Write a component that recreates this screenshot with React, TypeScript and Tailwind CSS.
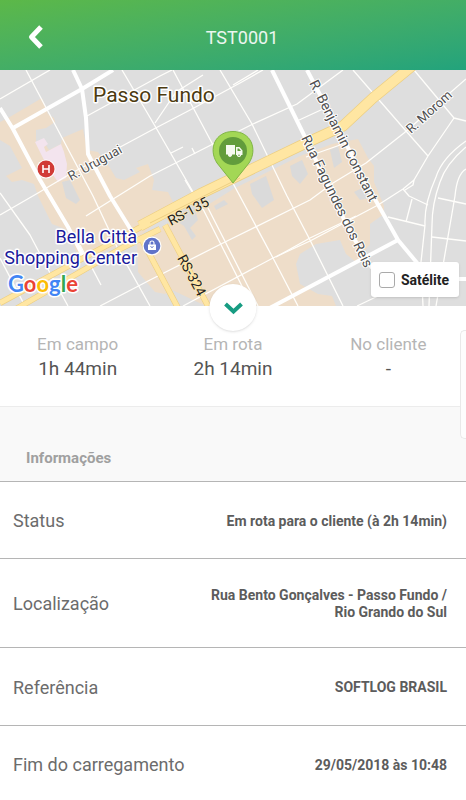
import React from "react";

const BLOCKS = [
  "8,118 42,98 48,114 54,118 55,122 46,128 36,130 36,142 44,142 49,150 61,144 62,138 83,129 87,150 98,152 110,168 116,178 124,180 140,172 136,168 148,164 154,180 152,190 168,192 174,204 160,220 137,238 80,262 68,230 52,224 46,212 38,196 34,184 22,180 12,182 6,176 22,168 10,146 0,140 0,122",
  "160,228 206,206 235,188 300,156 332,144 358,139 368,158 374,166 374,182 384,206 384,214 370,224 370,244 356,262 346,254 340,240 316,244 300,254 296,264 300,284 318,294 332,296 336,306 206,306 172,290 165,294 155,292 138,272 137,240",
];

const GAPS = [
  "62,182 70,180 80,200 76,204 66,198",
  "182,210 194,206 198,220 190,228 196,236 192,240 184,226 178,222",
  "250,184 266,176 274,200 262,208 252,194",
  "290,166 302,160 308,174 300,184 292,176",
  "330,150 338,146 342,162 334,168",
  "214,206 224,200 228,204 216,210",
  "354,192 366,186 370,198 360,200",
];

const STREETS = [
  "M26,70 L93,196 L117,247 L150,306",
  "M0,193 L30,235 L50,273 L68,306",
  "M0,258 L25,306",
  "M0,215 L38,193 L70,174 L150,131 L192,109 L240,83 L263,70",
  "M87,116 L160,76 L172,70",
  "M0,99 L50,70",
  "M122,70 L155,126 L193,192",
  "M155,123 L176,92 L203,75",
  "M86,216 L150,176 L213,144 L253,124 L297,104 L343,70",
  "M171,153 L183,147 M192,148 L195,154",
  "M233,85 L258,70",
  "M173,70 L213,145 L235,187 L273,258 L298,306",
  "M220,70 L252,124 L287,196 L310,240 L343,306",
  "M297,121 L323,109",
  "M306,157 L343,144",
  "M185,180 L203,210",
  "M203,209 L252,306 M208,208 L258,306",
  "M100,306 L150,280 L223,243 L310,200 L333,183 L366,163 L404,133 L466,79",
  "M183,306 L273,258 L310,241 L378,205 L403,189 L414,180 L428,156 L454,118",
  "M276,257 L310,238 L356,216",
  "M353,70 L406,131 L428,156",
  "M414,70 L454,118 L466,121",
  "M466,141 Q442,158 436,177 Q424,204 425,225 L421,262 L423,306",
  "M466,147 Q446,164 440,182 Q432,204 432,225 L429,306",
  "M466,169 Q457,174 455,196 L436,306",
  "M438,198 L466,204 M432,237 L466,241",
  "M388,217 L425,226",
  "M403,189 L409,196 L428,205 M414,180 L413,185 L405,190",
  "M412,199 L406,222",
  "M357,306 L378,296",
  "M80,245 L101,285",
];

const AVENUES = [
  "M13,128 L82,89 L113,70",
  "M0,108 L13,129 L40,180 L68,227 L83,256",
  "M73,70 L82,89 L86,118 L88,154 L110,196 L136,238",
  "M272,70 L303,133 L350,232 L372,268",
  "M307,70 L345,142 L376,201 L398,240 L418,264",
  "M266,310 L398,240",
  "M456,279 L466,279",
];

function Roads() {
  const main = "M412,66 L373,98 L343,126 L306,143 L200,194 L140,226";
  const twin = "M152,221 L0,303 M160,229 L120,249 L16,309";
  const branch = "M165,225 L208,306 M142,240 L178,308";
  return (
    <g fill="none" strokeLinejoin="round">
      <g stroke="#fffefb" strokeWidth="1.3">
        {STREETS.map((d) => <path key={d} d={d} />)}
      </g>
      <g stroke="#fff" strokeWidth="4">
        {AVENUES.map((d) => <path key={d} d={d} />)}
      </g>
      <g stroke="#edcf82">
        <path d={main} strokeWidth="11" />
        <path d={twin} strokeWidth="6" />
        <path d={branch} strokeWidth="6" />
      </g>
      <g stroke="#ffe6a2">
        <path d={main} strokeWidth="9.5" />
        <path d={twin} strokeWidth="4.8" />
        <path d={branch} strokeWidth="4.8" />
      </g>
      <path d="M240,178 L150,223" stroke="#edcf82" strokeWidth="1" />
    </g>
  );
}

function CityMap() {
  return (
    <svg
      viewBox="0 70 466 236"
      preserveAspectRatio="xMidYMid slice"
      className="block h-[236px] w-full bg-[#dedede]"
      role="img"
      aria-label="Passo Fundo"
    >
      <g fill="#eeddc9">
        {BLOCKS.map((p) => <polygon key={p} points={p} />)}
      </g>
      <g fill="#dadada">
        {GAPS.map((p) => <polygon key={p} points={p} />)}
      </g>
      <polygon
        points="35,142 44,138 48,144 44,147 46,152 61,144 64,152 67,164 66,178 58,182 48,168"
        fill="#f3e4ee"
      />
      <Roads />

      <g
        fontFamily="Roboto, 'Liberation Sans', sans-serif"
        stroke="#fff"
        strokeWidth="3"
        strokeLinejoin="round"
        style={{ paintOrder: "stroke" }}
      >
        <text x="93" y="102" fontSize="21" fill="#4c3a10">Passo Fundo</text>
        <g fontSize="18" fill="#1a1a9c" textAnchor="end">
          <text x="137" y="243">Bella Città</text>
          <text x="137" y="264">Shopping Center</text>
        </g>
        <g fill="#4f4f4f" strokeWidth="2">
          <text transform="translate(71 181) rotate(-29)" fontSize="13">R. Uruguai</text>
          <text transform="translate(411 134) rotate(-42)" fontSize="13">R. Morom</text>
          <text transform="translate(309 83) rotate(63)" fontSize="14">R. Benjamin Constant</text>
          <text transform="translate(301 138) rotate(64)" fontSize="14">Rua Fagundes dos Reis</text>
        </g>
        <g fontSize="14" fill="#222" stroke="#ffe9b0" strokeWidth="1.5">
          <text transform="translate(171 226) rotate(-28)">RS-135</text>
          <text transform="translate(177 258) rotate(62)">RS-324</text>
        </g>
        <text x="8" y="292" fontFamily="Lato, sans-serif" fontSize="22" fontWeight="700">
          <tspan fill="#4285f4">G</tspan>
          <tspan fill="#ea4335">o</tspan>
          <tspan fill="#fbbc05">o</tspan>
          <tspan fill="#4285f4">g</tspan>
          <tspan fill="#34a853">l</tspan>
          <tspan fill="#ea4335">e</tspan>
        </text>
      </g>

      <circle cx="46" cy="169" r="9.500" fill="#fff" />
      <circle cx="46" cy="169" r="8.500" fill="#d13b36" />
      <path d="M43,165 V173 M49,165 V173 M43,169 H49" stroke="#fff" strokeWidth="1.6" fill="none" />

      <circle cx="152" cy="246" r="9.5" fill="#fff" />
      <circle cx="152" cy="246" r="8.3" fill="#6073c9" />
      <path d="M148,244.500 H156 V250 H148 Z" fill="#fff" />
      <path d="M150,245 V243 A2,2 0 0 1 154,243 V245" stroke="#fff" strokeWidth="1.1" fill="none" />
      <path d="M150.500,246.500 Q152,248.500 153.500,246.500" stroke="#6073c9" strokeWidth="1" fill="none" />

      <path
        d="M233,183 L217,163 C208,149 215,131.500 233,131.500 C251,131.500 258,149 249,163 Z"
        fill="#a3d755"
        stroke="#80b544"
        strokeWidth="1"
      />
      <circle cx="233" cy="151" r="14" fill="#629c3c" />
      <path
        d="M226,145 H235 V154.500 H232.300 A2.400,2.400 0 0 1 227.700,154.500 H226 Z M236,147 H239.500 L242.500,150.500 V155 H241.300 A2.400,2.400 0 0 1 236.700,155 H236 Z"
        fill="#f5faf0"
      />
      <path d="M237.500,148.500 H239 L241,151 H237.500 Z" fill="#629c3c" />
      <circle cx="230" cy="155.200" r="1.700" fill="#f5faf0" />
      <circle cx="239" cy="155.200" r="1.700" fill="#f5faf0" />
      <circle cx="239" cy="155.200" r="0.800" fill="#629c3c" />
    </svg>
  );
}

const STATS = [
  { label: "Em campo", value: "1h 44min" },
  { label: "Em rota", value: "2h 14min" },
  { label: "No cliente", value: "-" },
];

const ROWS = [
  { label: "Status", value: "Em rota para o cliente (à 2h 14min)", height: "h-[77px]" },
  { label: "Localização", value: "Rua Bento Gonçalves - Passo Fundo / Rio Grando do Sul", height: "h-[89px]" },
  { label: "Referência", value: "SOFTLOG BRASIL", height: "h-[78px]" },
  { label: "Fim do carregamento", value: "29/05/2018 às 10:48", height: "h-[77px]" },
];

export default function App() {
  return (
    <div className="flex min-h-screen flex-col bg-white font-['Roboto','Liberation_Sans',sans-serif]">
      <header className="grid h-[70px] grid-cols-[72px_1fr_72px] items-center bg-linear-to-br from-[#5cb848] to-[#22a37c] pt-1">
        <button type="button" aria-label="Voltar" className="flex h-12 items-center justify-center">
          <svg width="16" height="24" viewBox="0 0 16 24" fill="none">
            <path d="M13,2 L3.500,12 L13,22" stroke="#fff" strokeWidth="5" strokeLinejoin="round" />
          </svg>
        </button>
        <h1 className="pt-px pl-[18px] text-center text-lg text-white/90">TST0001</h1>
      </header>

      <section className="relative">
        <CityMap />
        <label className="absolute right-[7px] bottom-[9px] flex h-[35px] items-center gap-[6px] rounded-[3px] bg-white pr-[10px] pl-2 shadow-sm">
          <input
            type="checkbox"
            className="size-4 appearance-none rounded-[3px] border border-[#aaa] bg-white checked:bg-[#0e9d80]"
          />
          <span className="text-sm font-bold text-[#222]">Satélite</span>
        </label>
        <button
          type="button"
          aria-label="Expandir mapa"
          className="absolute -bottom-[25px] left-1/2 flex size-[47px] -translate-x-1/2 items-center justify-center rounded-full bg-white shadow"
        >
          <svg width="20" height="14" viewBox="0 0 20 14" fill="none">
            <path d="M2,3 L10,10.500 L18,3" stroke="#179c82" strokeWidth="4" />
          </svg>
        </button>
      </section>

      <section className="relative">
        <dl className="grid h-[100px] grid-cols-3 pt-[26px] text-center">
          {STATS.map((s) => (
            <div key={s.label}>
              <dt className="text-[17px] leading-6 text-[#b5b5b5]">{s.label}</dt>
              <dd className="text-[19px] leading-[26px] text-[#555]">{s.value}</dd>
            </div>
          ))}
        </dl>
        <div className="absolute top-6 right-0 z-10 h-[109px] w-[6px] rounded-l-[5px] border border-r-0 border-[#e9e9e9] bg-[#fdfdfd]" />
      </section>

      <section className="border-t border-[#ececec]">
        <h2 className="h-[74px] bg-[#f9f9f9] px-[26px] pt-[39px] text-[15px] leading-6 font-bold text-[#a0a0a0]">
          Informações
        </h2>
        <dl>
          {ROWS.map((r) => (
            <div
              key={r.label}
              className={`flex items-center justify-between border-t border-[#b5b5b5] pt-[2px] pr-[19px] pl-[13px] ${r.height}`}
            >
              <dt className="text-lg text-[#6c6c6c]">{r.label}</dt>
              <dd className="max-w-[250px] text-right text-sm leading-[17px] font-bold text-[#5c5c5c]">{r.value}</dd>
            </div>
          ))}
        </dl>
      </section>
    </div>
  );
}
